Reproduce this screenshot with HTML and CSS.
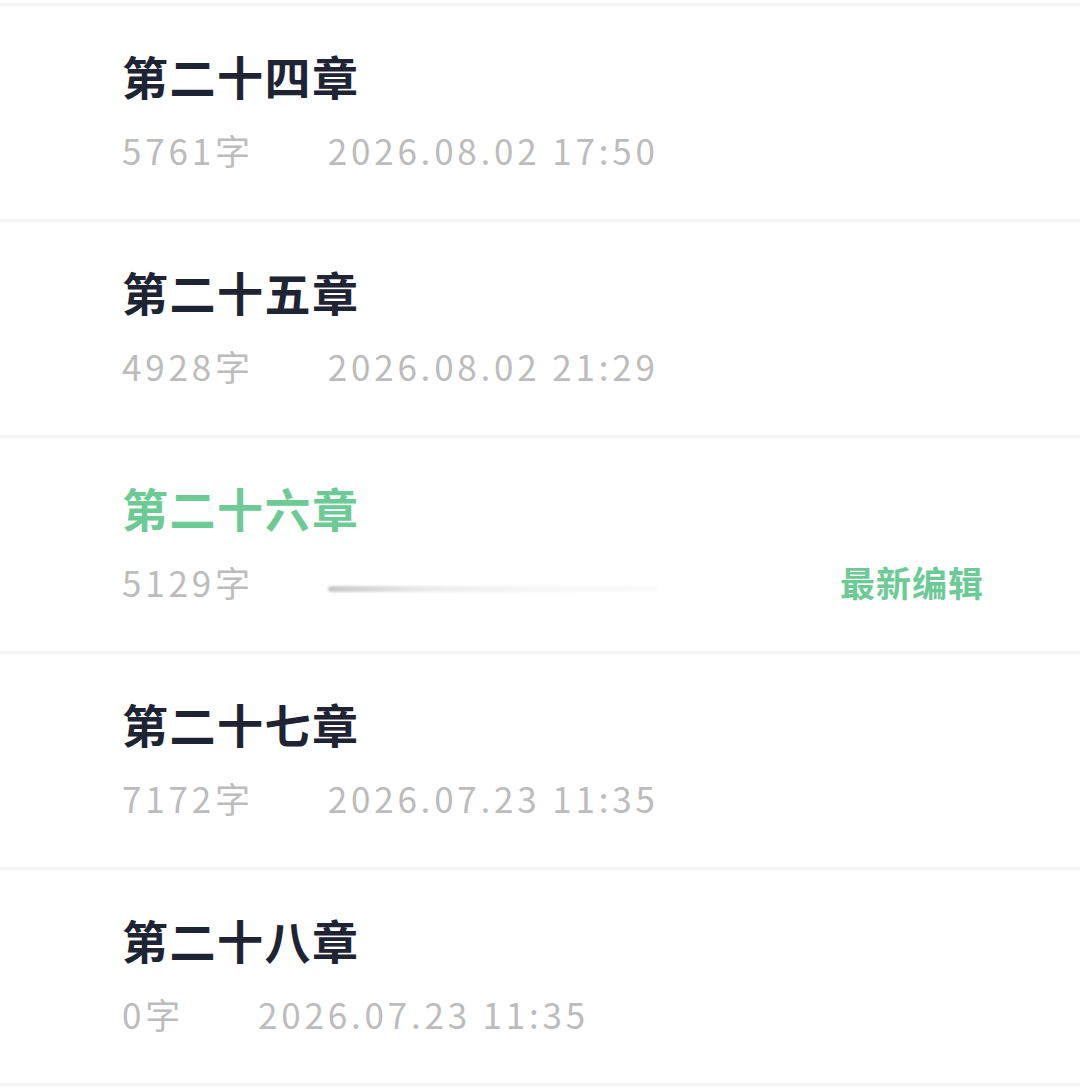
FILE: index.html
```html
<!DOCTYPE html>
<html lang="zh-CN">
<head>
  <meta charset="UTF-8">
  <meta name="viewport" content="width=device-width, initial-scale=1.0">
  <title>章节列表</title>
  <link rel="stylesheet" href="styles.css">
</head>
<body>

  <!-- Chapter list -->
  <ul class="chapter-list">
    <li class="chapter">
      <div class="chapter-title">第二十四章</div>
      <div class="chapter-meta">
        <span class="chapter-count">5761字</span>
        <span class="chapter-date">2026.08.02 17:50</span>
      </div>
    </li>
    <li class="chapter">
      <div class="chapter-title">第二十五章</div>
      <div class="chapter-meta">
        <span class="chapter-count">4928字</span>
        <span class="chapter-date">2026.08.02 21:29</span>
      </div>
    </li>
    <!-- Currently edited chapter -->
    <li class="chapter chapter--active">
      <div class="chapter-title">第二十六章</div>
      <div class="chapter-meta">
        <span class="chapter-count">5129字</span>
        <span class="chapter-date chapter-date--loading"><span class="shimmer"></span></span>
        <span class="chapter-tag">最新编辑</span>
      </div>
    </li>
    <li class="chapter">
      <div class="chapter-title">第二十七章</div>
      <div class="chapter-meta">
        <span class="chapter-count">7172字</span>
        <span class="chapter-date">2026.07.23 11:35</span>
      </div>
    </li>
    <li class="chapter">
      <div class="chapter-title">第二十八章</div>
      <div class="chapter-meta">
        <span class="chapter-count">0字</span>
        <span class="chapter-date">2026.07.23 11:35</span>
      </div>
    </li>
  </ul>

</body>
</html>
```

FILE: styles.css
```css
/* General Styles */
body {
  margin: 0;
  padding-top: 3px;
  background-color: #ffffff;
  font-family: "Noto Sans CJK SC", "Noto Sans", sans-serif;
}

.chapter-list {
  list-style: none;
  margin: 0;
  padding: 0;
  border-top: 3px solid #f4f4f4;
}

.chapter {
  height: 216px;
  box-sizing: border-box;
  padding: 41px 96px 0 122px;
  border-bottom: 3px solid #f4f4f4;
}

.chapter-title {
  font-size: 46px;
  line-height: 56px;
  font-weight: 700;
  color: #1e2433;
  letter-spacing: 1.5px;
}

.chapter-meta {
  display: flex;
  align-items: center;
  margin-top: 24px;
  height: 44px;
  font-size: 35px;
  color: #bcbcbc;
  letter-spacing: 3.8px;
}

.chapter-count {
  margin-right: 74px;
}

/* Active chapter */
.chapter--active .chapter-title {
  color: #6ccb95;
}

.chapter-date--loading {
  width: 330px;
  height: 44px;
  position: relative;
}

.shimmer {
  position: absolute;
  left: 0;
  right: 0;
  top: 27px;
  height: 6px;
  border-radius: 3px;
  background: linear-gradient(to right, #c8c8c8, #ececec 30%, #f6f6f6 60%, #fbfbfb);
  filter: blur(1px);
}

.chapter-tag {
  margin-left: auto;
  font-size: 35px;
  font-weight: 700;
  color: #6ccb95;
  letter-spacing: 1px;
}
```
